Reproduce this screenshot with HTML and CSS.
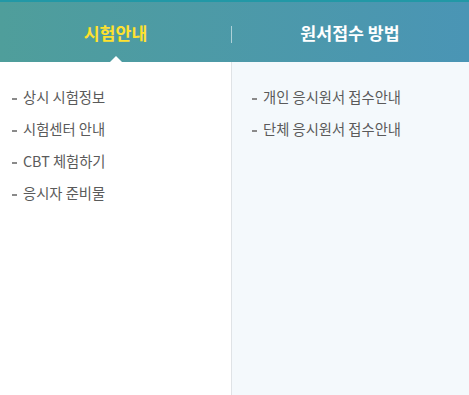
FILE: index.html
```html
<html>
  <head>
    <title>시험안내</title>
    <link rel="stylesheet" href="styles.css">
  </head>
  <body>
    <header class="tabs">
      <div class="tab active">시험안내</div>
      <div class="tab">원서접수 방법</div>
    </header>
    <section class="panels">
      <ul class="menu">
        <li>상시 시험정보</li>
        <li>시험센터 안내</li>
        <li>CBT 체험하기</li>
        <li>응시자 준비물</li>
      </ul>
      <ul class="menu alt">
        <li>개인 응시원서 접수안내</li>
        <li>단체 응시원서 접수안내</li>
      </ul>
    </section>
  </body>
</html>
```

FILE: styles.css
```css
body {
  margin: 0;
  font-family: "Noto Sans CJK KR", "Noto Sans", sans-serif;
  background: #fff;
  height: 395px;
  display: flex;
  flex-direction: column;
}
.tabs {
  display: grid;
  grid-template-columns: 231px 1fr;
  height: 60px;
  border-top: 2px solid #2298a6;
  background: linear-gradient(to right, #4f9e9b, #4a95b5);
}
.tab {
  position: relative;
  display: flex;
  align-items: center;
  justify-content: center;
  padding-top: 1px;
  color: #fff;
  font-size: 17.3px;
  font-weight: bold;
}
.tab + .tab::before {
  content: "";
  position: absolute;
  left: 0;
  top: 24px;
  height: 17px;
  width: 1px;
  background: rgba(255, 255, 255, 0.55);
}
.tab.active {
  color: #ffe12e;
}
.tab.active::after {
  content: "";
  position: absolute;
  bottom: 0;
  left: 50%;
  margin-left: -6px;
  border: 6px solid transparent;
  border-bottom-color: #fff;
  border-top: 0;
}
.panels {
  flex: 1;
  display: grid;
  grid-template-columns: 231px 1fr;
}
.menu {
  margin: 0;
  padding: 19px 0 0 12px;
  list-style: none;
  font-size: 14.3px;
  color: #5a5a5a;
}
.menu li {
  line-height: 32px;
}
.menu li::before {
  content: "";
  display: inline-block;
  width: 5px;
  height: 2px;
  margin-right: 6px;
  vertical-align: middle;
  background: #8a8a8a;
}
.menu.alt {
  padding-left: 20px;
  background: #f4f9fc;
  border-left: 1px solid #dfe3e6;
}
```
